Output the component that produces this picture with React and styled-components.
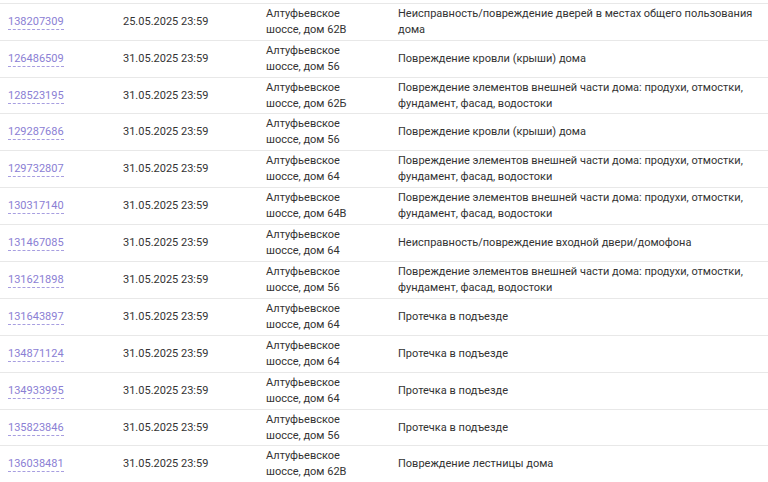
import React from "react";
import styled, { createGlobalStyle } from "styled-components";

const Global = createGlobalStyle`
  html, body { margin: 0; padding: 0; background: #fff; }
  body { font-family: Roboto, "Noto Sans", Arial, sans-serif; }
`;

const Table = styled.div`
  width: 768px;
  padding-top: 2.8px;
  font-size: 11px;
  line-height: 16px;
  color: #333;
`;

const Row = styled.div`
  display: grid;
  grid-template-columns: 115px 143px 132px 1fr;
  align-items: center;
  min-height: 36.9px;
  border-top: 1px solid #e8e8e8;
  box-sizing: border-box;
`;

const Cell = styled.div`
  padding: 0 ${(p) => p.$pr || 8}px 0 8px;
`;

const IdLink = styled.a`
  color: #8b80d4;
  text-decoration: none;
  border-bottom: 1px dashed #a79ee0;
  padding-bottom: 1px;
  cursor: pointer;
`;

const rows = [
  ["138207309", "25.05.2025 23:59", "62В", "Неисправность/повреждение дверей в местах общего пользования дома"],
  ["126486509", "31.05.2025 23:59", "56", "Повреждение кровли (крыши) дома"],
  ["128523195", "31.05.2025 23:59", "62Б", "Повреждение элементов внешней части дома: продухи, отмостки, фундамент, фасад, водостоки"],
  ["129287686", "31.05.2025 23:59", "56", "Повреждение кровли (крыши) дома"],
  ["129732807", "31.05.2025 23:59", "64", "Повреждение элементов внешней части дома: продухи, отмостки, фундамент, фасад, водостоки"],
  ["130317140", "31.05.2025 23:59", "64В", "Повреждение элементов внешней части дома: продухи, отмостки, фундамент, фасад, водостоки"],
  ["131467085", "31.05.2025 23:59", "64", "Неисправность/повреждение входной двери/домофона"],
  ["131621898", "31.05.2025 23:59", "56", "Повреждение элементов внешней части дома: продухи, отмостки, фундамент, фасад, водостоки"],
  ["131643897", "31.05.2025 23:59", "64", "Протечка в подъезде"],
  ["134871124", "31.05.2025 23:59", "64", "Протечка в подъезде"],
  ["134933995", "31.05.2025 23:59", "64", "Протечка в подъезде"],
  ["135823846", "31.05.2025 23:59", "56", "Протечка в подъезде"],
  ["136038481", "31.05.2025 23:59", "62В", "Повреждение лестницы дома"],
];

export default function App() {
  return (
    <>
      <Global />
      <Table>
        {rows.map(([id, date, house, desc]) => (
          <Row key={id}>
            <Cell>
              <IdLink>{id}</IdLink>
            </Cell>
            <Cell>{date}</Cell>
            <Cell $pr={30}>Алтуфьевское шоссе, дом {house}</Cell>
            <Cell $pr={2}>{desc}</Cell>
          </Row>
        ))}
      </Table>
    </>
  );
}
